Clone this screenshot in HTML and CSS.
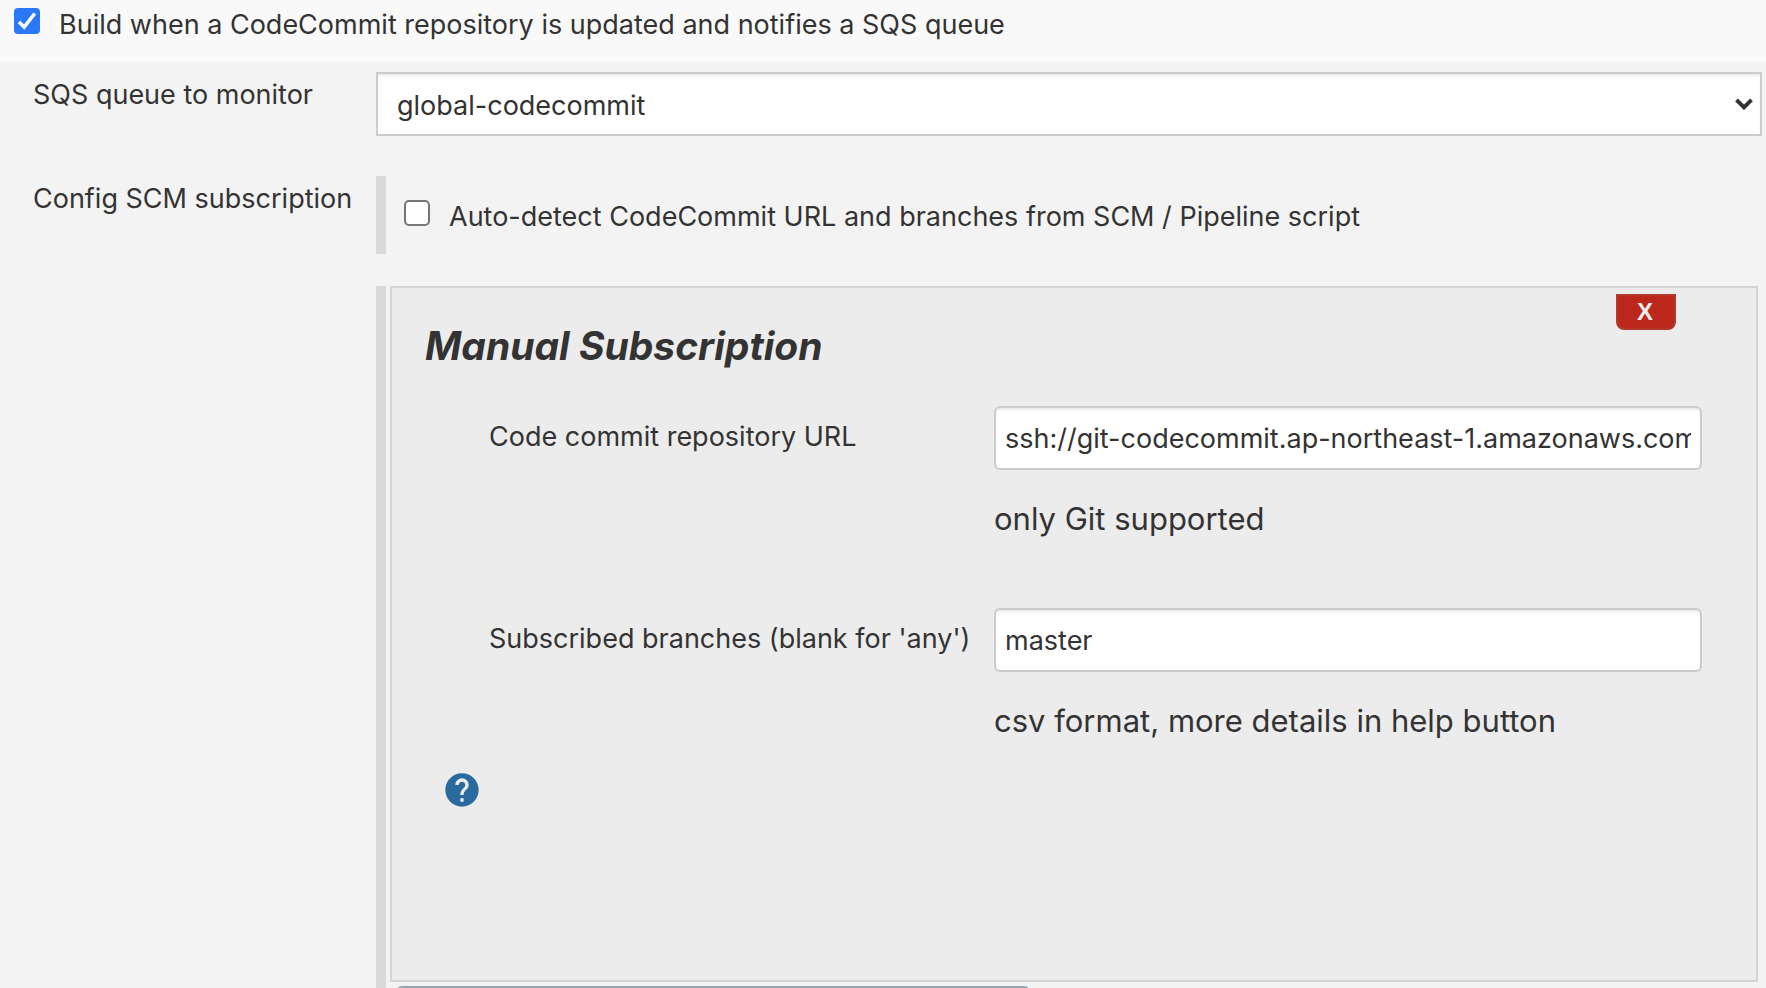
FILE: index.html
```html
<!DOCTYPE html>
<html lang="en">
<head>
<meta charset="utf-8">
<title>Build triggers</title>
<link rel="stylesheet" href="styles.css">
</head>
<body>
<form class="config">
  <div class="trigger">
    <input class="check" type="checkbox" id="trigger" checked>
    <label for="trigger">Build when a CodeCommit repository is updated and notifies a SQS queue</label>
  </div>
  <div class="row row-queue">
    <label class="row-label" for="queue">SQS queue to monitor</label>
    <div class="select-wrap">
      <select class="field select" id="queue"><option>global-codecommit</option></select>
      <svg class="chevron" viewBox="0 0 18 12" aria-hidden="true"><path d="M1.5 1.8 9 9.3l7.5-7.5" fill="none" stroke="#333" stroke-width="4"/></svg>
    </div>
  </div>
  <div class="row row-scm">
    <div class="row-label">Config SCM subscription</div>
    <div class="subscriptions">
      <div class="item item-auto">
        <input class="check" type="checkbox" id="auto">
        <label for="auto">Auto-detect CodeCommit URL and branches from SCM / Pipeline script</label>
      </div>
      <div class="item item-manual">
        <section class="panel">
          <button class="delete" type="button">X</button>
          <h2 class="title">Manual Subscription</h2>
          <div class="entry">
            <label for="url">Code commit repository URL</label>
            <div>
              <input class="field text" type="text" id="url" value="ssh://git-codecommit.ap-northeast-1.amazonaws.com/v1/repos/">
              <p class="hint">only Git supported</p>
            </div>
          </div>
          <div class="entry">
            <label for="branches">Subscribed branches (blank for 'any')</label>
            <div>
              <input class="field text" type="text" id="branches" value="master">
              <p class="hint">csv format, more details in help button</p>
            </div>
          </div>
          <button class="help" type="button" aria-label="Help">
            <svg viewBox="0 0 24 24" aria-hidden="true"><path fill="#2b6a9f" d="M12 2C6.480 2 2 6.480 2 12s4.480 10 10 10 10-4.480 10-10S17.520 2 12 2zm1 17h-2v-2h2v2zm2.070-7.750l-.9.920C13.450 12.900 13 13.500 13 15h-2v-.5c0-1.100.45-2.100 1.170-2.830l1.240-1.260c.37-.36.59-.86.59-1.410 0-1.100-.9-2-2-2s-2 .9-2 2H8c0-2.210 1.790-4 4-4s4 1.790 4 4c0 .88-.36 1.680-.93 2.250z"/></svg>
          </button>
        </section>
        <button class="add" type="button" aria-label="Add subscription"></button>
      </div>
    </div>
  </div>
</form>
</body>
</html>
```
FILE: styles.css
```css
* { box-sizing: border-box; }

body {
  margin: 0;
  background: #f3f3f3;
  color: #333;
  font: 27px/34px Inter, "Liberation Sans", sans-serif;
}

.config {
  height: 100vh;
  overflow: hidden;
}

.trigger {
  display: flex;
  gap: 19px;
  height: 62px;
  padding: 8px 14px;
  background: #f9f9f9;
}

.check {
  appearance: none;
  flex: none;
  width: 26px;
  height: 26px;
  margin: 0;
  border: 2px solid #767676;
  border-radius: 5px;
  background: #fff;
}

.check:checked {
  border: 0;
  border-radius: 4px;
  background: #2a78f6 url("data:image/svg+xml,%3Csvg xmlns='http://www.w3.org/2000/svg' viewBox='0 0 26 26'%3E%3Cpath d='M5 14l5.200 5L20.700 5.500' fill='none' stroke='white' stroke-width='3.600'/%3E%3C/svg%3E");
}

.row {
  display: grid;
  grid-template-columns: 343px 1fr;
  padding-left: 33px;
}

.row-queue { padding-top: 10px; padding-right: 4px; }
.row-scm { padding-top: 40px; padding-right: 8px; }
.row-label { padding-top: 6px; }

.field {
  display: block;
  width: 100%;
  height: 64px;
  border: 2px solid #ccc;
  background: #fff;
  box-shadow: inset 0 2px 2px rgba(0, 0, 0, .075);
  color: #333;
  font: inherit;
}

.select-wrap { position: relative; }
.select { appearance: none; padding: 4px 19px 0; }
.chevron { position: absolute; top: 26px; right: 9px; width: 18px; height: 12px; pointer-events: none; }
.text { padding: 0 9px; border-radius: 6px; }

.item { border-left: 10px solid #d9d9d9; }

.item-auto {
  display: flex;
  gap: 19px;
  padding: 24px 0 20px 18px;
}

.item-manual { margin-top: 32px; padding-left: 4px; }

.panel {
  position: relative;
  min-height: 696px;
  padding: 37px 54px 0 33px;
  border: 2px solid #d4d4d4;
  background: #ececec;
}

.title {
  margin: 0 0 39px;
  font-size: 39px;
  font-style: italic;
  font-weight: 700;
  line-height: 42px;
}

.entry {
  display: grid;
  grid-template-columns: 505px 1fr;
  padding-left: 64px;
  margin-bottom: 69px;
}

.entry label { padding-top: 14px; }

.hint {
  margin: 29px 0 0;
  font-size: 31px;
  line-height: 40px;
}

.item-manual .entry + .entry { margin-bottom: 29px; }

.delete {
  position: absolute;
  top: 6px;
  right: 80px;
  width: 60px;
  height: 36px;
  padding: 0 2px 0 0;
  border: 2px solid #b23a2c;
  border-radius: 0 0 8px 8px;
  background: #bb271a;
  color: #eee;
  font: 700 24px/30px "Liberation Sans", Arial, sans-serif;
}

.help {
  display: block;
  width: 40px;
  height: 40px;
  margin-left: 17px;
  padding: 0;
  border: 0;
  background: none;
}

.help svg { display: block; }

.add {
  display: block;
  width: 634px;
  height: 60px;
  margin: 4px 0 0 6px;
  border: 2px solid #98a4ac;
  border-radius: 6px;
  background: #98a4ac;
}
```
